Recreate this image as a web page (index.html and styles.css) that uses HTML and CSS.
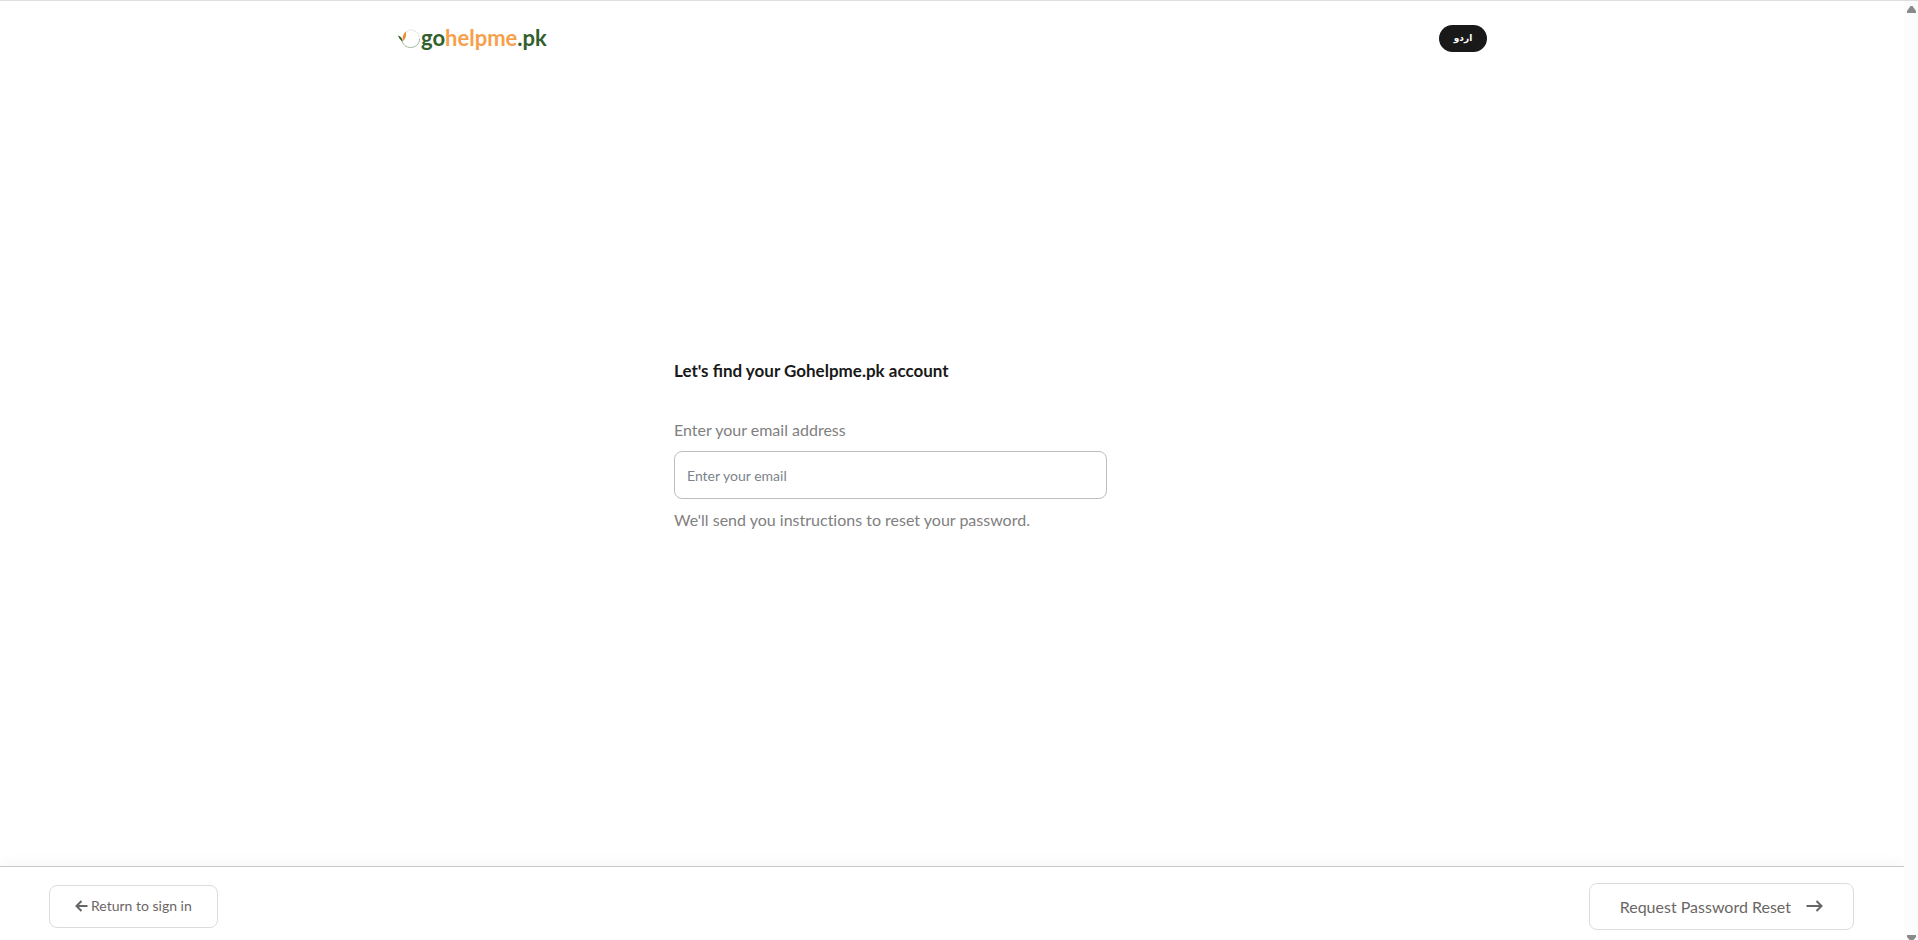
FILE: index.html
```html
<!DOCTYPE html>
<html lang="en">
  <head>
    <meta charset="UTF-8" />
    <meta name="viewport" content="width=device-width, initial-scale=1.0" />
    <title>Gohelpme.pk - Reset Password</title>
    <link rel="stylesheet" href="styles.css">
  </head>
  <body>
    <div class="page">
      <!-- Header -->
      <header class="header">
        <a class="logo" href="#">
          <svg class="logo-icon" width="23" height="20" viewBox="0 0 23 20" aria-hidden="true">
            <path d="M8 3C9.500 1.500 11 1 13 1C18 1 21.500 5 21.500 10" fill="none" stroke="#cdd3cc" stroke-width="0.8" stroke-dasharray="2 1" />
            <path d="M3.500 11C5 15.500 8 18.500 12.500 18.500C17.500 18.500 21.500 15 21.500 10" fill="none" stroke="#9aaf97" stroke-width="0.9" />
            <path d="M0 6.500C2.500 7 4.500 9 4.800 12.500C2.500 11.500 0.800 9 0 6.500Z" fill="#31602c" />
            <path d="M8 2.500C8.500 6 8 9.500 5 12C4 8.500 4.800 5 8 2.500Z" fill="#f08c32" />
          </svg>
          <span class="logo-text">go<span class="logo-accent">helpme</span>.pk</span>
        </a>
        <button class="lang-btn" type="button" lang="ur">اردو</button>
      </header>

      <!-- Reset form -->
      <main class="main">
        <form class="reset-form" id="reset-form">
          <h1>Let's find your Gohelpme.pk account</h1>
          <label for="email">Enter your email address</label>
          <input type="email" id="email" placeholder="Enter your email" />
          <p>We'll send you instructions to reset your password.</p>
        </form>
      </main>

      <!-- Bottom actions -->
      <footer class="footer">
        <a class="btn btn-back" href="#">
          <svg width="13" height="12" viewBox="0 0 13 12" aria-hidden="true">
            <path d="M12.500 6H1.500M6.500 1L1.500 6L6.500 11" />
          </svg>
          Return to sign in
        </a>
        <button class="btn btn-submit" type="submit" form="reset-form">
          Request Password Reset
          <svg width="17" height="12" viewBox="0 0 17 12" aria-hidden="true">
            <path d="M0.500 6H15.500M10.500 1L15.500 6L10.500 11" />
          </svg>
        </button>
      </footer>
    </div>

    <!-- Scroll track -->
    <div class="scroll-track" aria-hidden="true">
      <svg width="9" height="7" viewBox="0 0 9 7"><path d="M3.500 0H5.500L9 5V7H0V5Z" /></svg>
      <svg width="9" height="5" viewBox="0 0 9 5"><path d="M0 0H9V2L6.500 5H2.500L0 2Z" /></svg>
    </div>
  </body>
</html>
```
FILE: styles.css
```css
* {
  box-sizing: border-box;
}

body {
  font-family: Lato, sans-serif;
  font-size: 16px;
  line-height: 24px;
  color: #808080;
  background: #fff;
  margin: 0;
  display: flex;
  height: 100vh;
  border-top: 1px solid #dedede;
}

.page {
  flex: 1;
  display: flex;
  flex-direction: column;
}

.header {
  width: 100%;
  max-width: 1140px;
  margin: 0 auto;
  padding: 24px 35px 16px 16px;
  display: flex;
  justify-content: space-between;
  align-items: center;
}

.logo {
  display: flex;
  align-items: center;
  text-decoration: none;
}

.logo-text {
  font-size: 22px;
  font-weight: 700;
  line-height: 24px;
  padding-bottom: 2px;
  color: #31602c;
}

.logo-accent {
  color: #f7a04b;
}

.lang-btn {
  width: 48px;
  height: 27px;
  padding: 0 0 2px;
  border: none;
  border-radius: 14px;
  background: #191919;
  color: #fff;
  font-family: "DejaVu Sans", sans-serif;
  font-size: 9px;
  font-weight: 700;
  cursor: pointer;
}

.main {
  flex: 1;
  display: flex;
  justify-content: center;
  align-items: center;
  padding-bottom: 44px;
}

.reset-form {
  width: 556px;
}

h1 {
  margin: 0 0 35px;
  font-size: 17px;
  font-weight: 700;
  line-height: 24px;
  color: #191919;
}

label {
  display: block;
  margin-bottom: 9px;
}

input {
  display: block;
  width: 100%;
  max-width: 433px;
  height: 48px;
  padding: 2px 12px 0;
  border: 1px solid #bdbdbd;
  border-radius: 8px;
  font-family: inherit;
  font-size: 14px;
  background: #fff;
}

input::placeholder {
  color: #7b848c;
}

p {
  margin: 9px 0 0;
  font-variant-ligatures: none;
}

.footer {
  display: flex;
  justify-content: space-between;
  align-items: center;
  height: 74px;
  padding: 5px 50px 0 49px;
  border-top: 1px solid #c8c8c8;
  box-shadow: 0 0 16px rgba(0, 0, 0, 0.05);
}

.btn {
  display: flex;
  align-items: center;
  justify-content: center;
  border: 1px solid #dcdcdc;
  border-radius: 8px;
  background: #fff;
  color: #6b6666;
  font-family: inherit;
  text-decoration: none;
  cursor: pointer;
}

.btn svg {
  fill: none;
  stroke: #666;
  stroke-width: 2;
}

.btn-back {
  height: 43px;
  padding: 0 25px;
  gap: 3px;
  font-size: 14px;
}

.btn-submit {
  height: 47px;
  padding: 0 30px;
  gap: 15px;
  font-size: 16px;
}

.scroll-track {
  width: 14px;
  display: flex;
  flex-direction: column;
  justify-content: space-between;
  align-items: center;
  padding-top: 5px;
  background: #fcfcfc;
}

.scroll-track svg {
  fill: #8a8a8a;
}
```
